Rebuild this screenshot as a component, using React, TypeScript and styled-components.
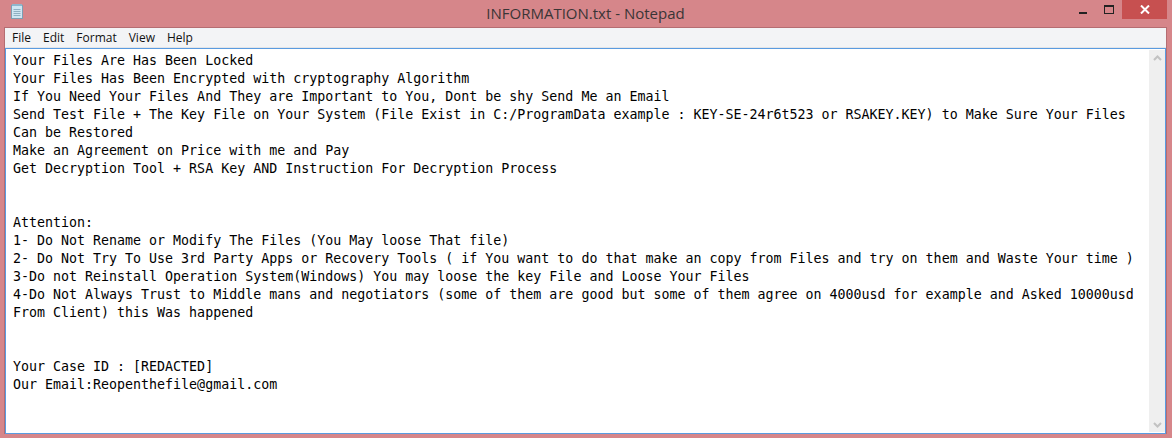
import React from "react";
import styled, { createGlobalStyle } from "styled-components";

const Global = createGlobalStyle`
  html, body { margin: 0; padding: 0; background: #d6868a; }
  #root { width: 1172px; height: 438px; overflow: hidden; }
`;

const Window = styled.div`
  width: 1172px;
  height: 438px;
  background: #d6868a;
  display: flex;
  flex-direction: column;
  box-sizing: border-box;
  padding: 0 5px 4px 4px;
`;

const TitleBar = styled.div`
  height: 27px;
  display: flex;
  align-items: flex-start;
  position: relative;
  flex-shrink: 0;
`;

const AppIcon = styled.div`
  width: 16px;
  height: 16px;
  margin: 3px 0 0 5px;
`;

const Title = styled.div`
  position: absolute;
  left: 0;
  right: 0;
  top: 3px;
  text-align: center;
  font-family: "Open Sans", "Noto Sans", sans-serif;
  font-size: 15px;
  color: #3a3536;
  line-height: 20px;
  pointer-events: none;
`;

const Controls = styled.div`
  margin-left: auto;
  display: flex;
  align-items: flex-start;
`;

const CtrlButton = styled.div<{ $close?: boolean }>`
  width: ${(p) => (p.$close ? "45px" : "26px")};
  height: 19px;
  background: ${(p) => (p.$close ? "#c75050" : "transparent")};
  display: flex;
  align-items: center;
  justify-content: center;
`;

const Client = styled.div`
  flex: 1;
  display: flex;
  flex-direction: column;
  border-left: 1px solid #b56d72;
  border-top: 1px solid #b56d72;
  border-right: 1px solid #b56d72;
  min-height: 0;
`;

const MenuBar = styled.div`
  height: 19px;
  background: #f3f4f6;
  border-bottom: 1px solid #e3e5e8;
  display: flex;
  align-items: center;
  padding-left: 1px;
  flex-shrink: 0;
`;

const MenuItem = styled.span`
  font-family: "Open Sans", "Noto Sans", sans-serif;
  font-size: 12px;
  color: #111;
  padding: 0 6px;
  line-height: 19px;
`;

const EditBox = styled.div`
  flex: 1;
  display: flex;
  border: 1px solid #5a9be0;
  background: #fff;
  min-height: 0;
`;

const TextArea = styled.div`
  flex: 1;
  padding: 3px 0 0 7px;
  font-family: "DejaVu Sans Mono", "Liberation Mono", monospace;
  font-size: 13.3px;
  line-height: 18px;
  color: #000;
  white-space: pre;
  overflow: hidden;
`;

const ScrollBar = styled.div`
  width: 16px;
  margin: 1px 0;
  background: #efefef;
  display: flex;
  flex-direction: column;
  justify-content: space-between;
  align-items: center;
  padding: 5px 0 4px;
`;

const lines = [
  "Your Files Are Has Been Locked",
  "Your Files Has Been Encrypted with cryptography Algorithm",
  "If You Need Your Files And They are Important to You, Dont be shy Send Me an Email",
  "Send Test File + The Key File on Your System (File Exist in C:/ProgramData example : KEY-SE-24r6t523 or RSAKEY.KEY) to Make Sure Your Files",
  "Can be Restored",
  "Make an Agreement on Price with me and Pay",
  "Get Decryption Tool + RSA Key AND Instruction For Decryption Process",
  "",
  "",
  "Attention:",
  "1- Do Not Rename or Modify The Files (You May loose That file)",
  "2- Do Not Try To Use 3rd Party Apps or Recovery Tools ( if You want to do that make an copy from Files and try on them and Waste Your time )",
  "3-Do not Reinstall Operation System(Windows) You may loose the key File and Loose Your Files",
  "4-Do Not Always Trust to Middle mans and negotiators (some of them are good but some of them agree on 4000usd for example and Asked 10000usd",
  "From Client) this Was happened",
  "",
  "",
  "Your Case ID : [REDACTED]",
  "Our Email:Reopenthefile@gmail.com",
];

export default function App() {
  return (
    <>
      <Global />
      <Window>
        <TitleBar>
          <AppIcon>
            <svg width="16" height="16" viewBox="0 0 16 16">
              <rect x="2.5" y="2.5" width="11" height="13" fill="#cfe6f2" stroke="#7c9fb3" />
              <line x1="4.5" y1="6.5" x2="11.5" y2="6.5" stroke="#8fb0c2" />
              <line x1="4.5" y1="8.5" x2="11.5" y2="8.5" stroke="#8fb0c2" />
              <line x1="4.5" y1="10.5" x2="11.5" y2="10.5" stroke="#8fb0c2" />
              <line x1="4.5" y1="12.5" x2="11.5" y2="12.5" stroke="#8fb0c2" />
              <rect x="3" y="1" width="10" height="2" fill="#8fb6cc" />
            </svg>
          </AppIcon>
          <Title>INFORMATION.txt - Notepad</Title>
          <Controls>
            <CtrlButton>
              <svg width="10" height="10" viewBox="0 0 10 10">
                <rect x="1" y="7" width="8" height="2" fill="#222" />
              </svg>
            </CtrlButton>
            <CtrlButton>
              <svg width="10" height="9" viewBox="0 0 10 9">
                <rect x="0.5" y="0.5" width="9" height="8" fill="none" stroke="#222" />
                <rect x="0" y="0" width="10" height="2" fill="#222" />
              </svg>
            </CtrlButton>
            <CtrlButton $close>
              <svg width="10" height="9" viewBox="0 0 10 9">
                <path d="M1 0.5 L9 8.5 M9 0.5 L1 8.5" stroke="#fff" strokeWidth="2" />
              </svg>
            </CtrlButton>
          </Controls>
        </TitleBar>
        <Client>
          <MenuBar>
            <MenuItem>File</MenuItem>
            <MenuItem>Edit</MenuItem>
            <MenuItem>Format</MenuItem>
            <MenuItem>View</MenuItem>
            <MenuItem>Help</MenuItem>
          </MenuBar>
          <EditBox>
            <TextArea>{lines.join("\n")}</TextArea>
            <ScrollBar>
              <svg width="9" height="6" viewBox="0 0 9 6">
                <path d="M1 5 L4.5 1.5 L8 5" fill="none" stroke="#c2c2c2" strokeWidth="2" />
              </svg>
              <svg width="9" height="6" viewBox="0 0 9 6">
                <path d="M1 1 L4.5 4.5 L8 1" fill="none" stroke="#c2c2c2" strokeWidth="2" />
              </svg>
            </ScrollBar>
          </EditBox>
        </Client>
      </Window>
    </>
  );
}
